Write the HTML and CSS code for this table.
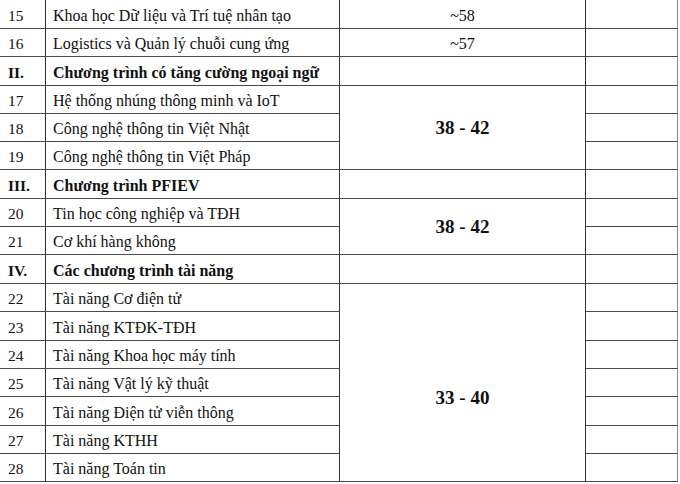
FILE: index.html
```html
<!DOCTYPE html>
<html lang="vi">
<head>
<meta charset="utf-8">
<title>Bảng điểm</title>
<link rel="stylesheet" href="styles.css">
</head>
<body>
<div class="grid">
  <div class="c num">15</div><div class="c name">Khoa học Dữ liệu và Trí tuệ nhân tạo</div><div class="c val">~58</div><div class="c last"></div>
  <div class="c num">16</div><div class="c name">Logistics và Quản lý chuỗi cung ứng</div><div class="c val">~57</div><div class="c last"></div>
  <div class="c num b">II.</div><div class="c name b">Chương trình có tăng cường ngoại ngữ</div><div class="c val"></div><div class="c last"></div>
  <div class="c num">17</div><div class="c name">Hệ thống nhúng thông minh và IoT</div><div class="c big span3">38 - 42</div><div class="c last"></div>
  <div class="c num">18</div><div class="c name">Công nghệ thông tin Việt Nhật</div><div class="c last"></div>
  <div class="c num">19</div><div class="c name">Công nghệ thông tin Việt Pháp</div><div class="c last"></div>
  <div class="c num b">III.</div><div class="c name b">Chương trình PFIEV</div><div class="c val"></div><div class="c last"></div>
  <div class="c num">20</div><div class="c name">Tin học công nghiệp và TĐH</div><div class="c big span2">38 - 42</div><div class="c last"></div>
  <div class="c num">21</div><div class="c name">Cơ khí hàng không</div><div class="c last"></div>
  <div class="c num b">IV.</div><div class="c name b">Các chương trình tài năng</div><div class="c val"></div><div class="c last"></div>
  <div class="c num">22</div><div class="c name">Tài năng Cơ điện tử</div><div class="c big span7">33 - 40</div><div class="c last"></div>
  <div class="c num">23</div><div class="c name">Tài năng KTĐK-TĐH</div><div class="c last"></div>
  <div class="c num">24</div><div class="c name">Tài năng Khoa học máy tính</div><div class="c last"></div>
  <div class="c num">25</div><div class="c name">Tài năng Vật lý kỹ thuật</div><div class="c last"></div>
  <div class="c num">26</div><div class="c name">Tài năng Điện tử viễn thông</div><div class="c last"></div>
  <div class="c num">27</div><div class="c name">Tài năng KTHH</div><div class="c last"></div>
  <div class="c num">28</div><div class="c name">Tài năng Toán tin</div><div class="c last"></div>
</div>
</body>
</html>
```

FILE: styles.css
```css
html, body {
  margin: 0;
  padding: 0;
  background: #ffffff;
}

body {
  font-family: "Liberation Serif", "Times New Roman", serif;
  font-size: 16px;
  line-height: 18px;
  color: #111111;
}

.grid {
  display: grid;
  width: 678px;
  grid-template-columns: 46px 294px 246px 92px;
  grid-template-rows: 29px 28px 29px 28px 28px 28px 29px 28px 28px 29px 28px 29px 28px 28px 29px 28px 28px;
}

.c {
  box-sizing: border-box;
  border-right: 1px solid #333333;
  border-bottom: 1px solid #4a4a4a;
  display: flex;
  align-items: flex-end;
  padding-bottom: 3px;
  white-space: nowrap;
}

.num {
  padding-left: 8px;
  font-size: 15.5px;
}

.name {
  padding-left: 7px;
}

.val {
  justify-content: center;
}

.last {
  border-right-color: #8a8a8a;
}

.b {
  font-weight: bold;
}

.big {
  font-weight: bold;
  font-size: 19px;
  line-height: 22px;
  justify-content: center;
  align-items: center;
  padding-bottom: 0;
}

.span3 {
  grid-row: span 3;
}

.span2 {
  grid-row: span 2;
}

.span7 {
  grid-row: span 7;
  padding-top: 31px;
}
```
